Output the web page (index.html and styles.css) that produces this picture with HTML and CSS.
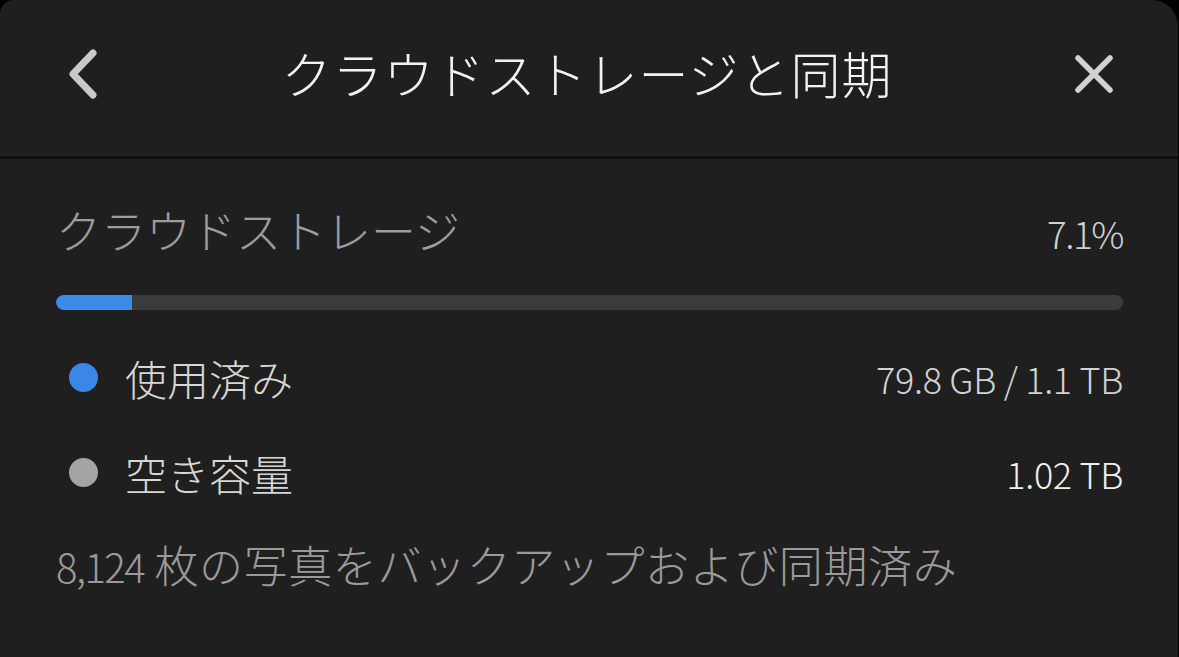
FILE: index.html
```html
<!DOCTYPE html>
<html lang="ja">
<head>
<meta charset="utf-8">
<link rel="stylesheet" href="styles.css">
</head>
<body>
<div class="panel">
  <header class="header">
    <button class="icon-btn back" aria-label="戻る">
      <svg width="34" height="50" viewBox="0 0 34 50"><path d="M27 4 L7 25 L27 46" fill="none" stroke="#c9c9c9" stroke-width="7" stroke-linecap="round" stroke-linejoin="round"/></svg>
    </button>
    <h1 class="title">クラウドストレージと同期</h1>
    <button class="icon-btn close" aria-label="閉じる">
      <svg width="40" height="40" viewBox="0 0 40 40"><path d="M4 4 L36 36 M36 4 L4 36" fill="none" stroke="#d2d2d2" stroke-width="5.5" stroke-linecap="round"/></svg>
    </button>
  </header>
  <main class="content">
    <div class="storage-head">
      <span class="label">クラウドストレージ</span>
      <span class="percent">7.1%</span>
    </div>
    <div class="bar"><div class="bar-fill" style="width:7.1%"></div></div>
    <div class="legend">
      <div class="row">
        <span class="dot dot-used"></span>
        <span class="row-label">使用済み</span>
        <span class="row-value">79.8 GB / 1.1 TB</span>
      </div>
      <div class="row">
        <span class="dot dot-free"></span>
        <span class="row-label">空き容量</span>
        <span class="row-value bright">1.02 TB</span>
      </div>
    </div>
    <p class="footer"><span class="num">8,124</span> 枚の写真をバックアップおよび同期済み</p>
  </main>
</div>
</body>
</html>
```

FILE: styles.css
```css
html, body {
  margin: 0;
  padding: 0;
  background: #000;
  height: 100%;
}
body {
  font-family: "Noto Sans CJK JP", "Noto Sans", sans-serif;
  font-weight: 300;
  overflow: hidden;
}
.panel {
  width: 1178px;
  height: 657px;
  background: #1f1f1f;
  border-top-left-radius: 14px;
  border-top-right-radius: 26px;
  display: flex;
  flex-direction: column;
}
.header {
  height: 159px;
  border-bottom: 3px solid #0f0f0f;
  display: flex;
  align-items: center;
  justify-content: space-between;
  padding: 0 64px 0 64px;
  box-sizing: border-box;
  flex-shrink: 0;
}
.icon-btn {
  background: none;
  border: 0;
  padding: 0;
  display: flex;
  align-items: center;
  justify-content: center;
}
.back {
  width: 34px;
  height: 50px;
  margin-top: -8px;
  margin-left: 2px;
}
.close {
  width: 40px;
  height: 40px;
  margin-top: -8px;
}
.title {
  margin: 0;
  margin-top: -12px;
  font-weight: 300;
  font-size: 50px;
  color: #f2f2f2;
  letter-spacing: 1px;
}
.content {
  padding: 38px 55px 0 56px;
  display: flex;
  flex-direction: column;
}
.storage-head {
  display: flex;
  justify-content: space-between;
  align-items: baseline;
  height: 68px;
}
.label {
  font-size: 45px;
  color: #9c9c9c;
}
.percent {
  font-size: 37px;
  color: #cfcfcf;
  letter-spacing: -1.5px;
}
.bar {
  margin-top: 30px;
  height: 15px;
  background: #3b3b3b;
  border-radius: 8px;
  overflow: hidden;
}
.bar-fill {
  height: 100%;
  background: #3b8ae8;
  border-radius: 8px 0 0 8px;
}
.legend {
  margin-top: 20px;
  display: flex;
  flex-direction: column;
}
.row {
  display: flex;
  align-items: center;
  height: 95px;
}
.dot {
  width: 29px;
  height: 29px;
  border-radius: 50%;
  margin-left: 13px;
  margin-right: 27px;
  flex-shrink: 0;
}
.dot-used { background: #3a87ea; }
.dot-free { background: #a4a4a4; }
.row-label {
  font-size: 42px;
  color: #d6d6d6;
  flex: 1;
}
.row-value {
  font-size: 36px;
  color: #d2d2d2;
  letter-spacing: -0.3px;
}
.row-value.bright { color: #f0f0f0; }
.footer {
  margin: 12px 0 0 0;
  font-size: 44px;
  color: #9a9a9a;
  letter-spacing: 0.6px;
}
.footer .num {
  font-size: 40px;
  letter-spacing: -1.5px;
}
```
